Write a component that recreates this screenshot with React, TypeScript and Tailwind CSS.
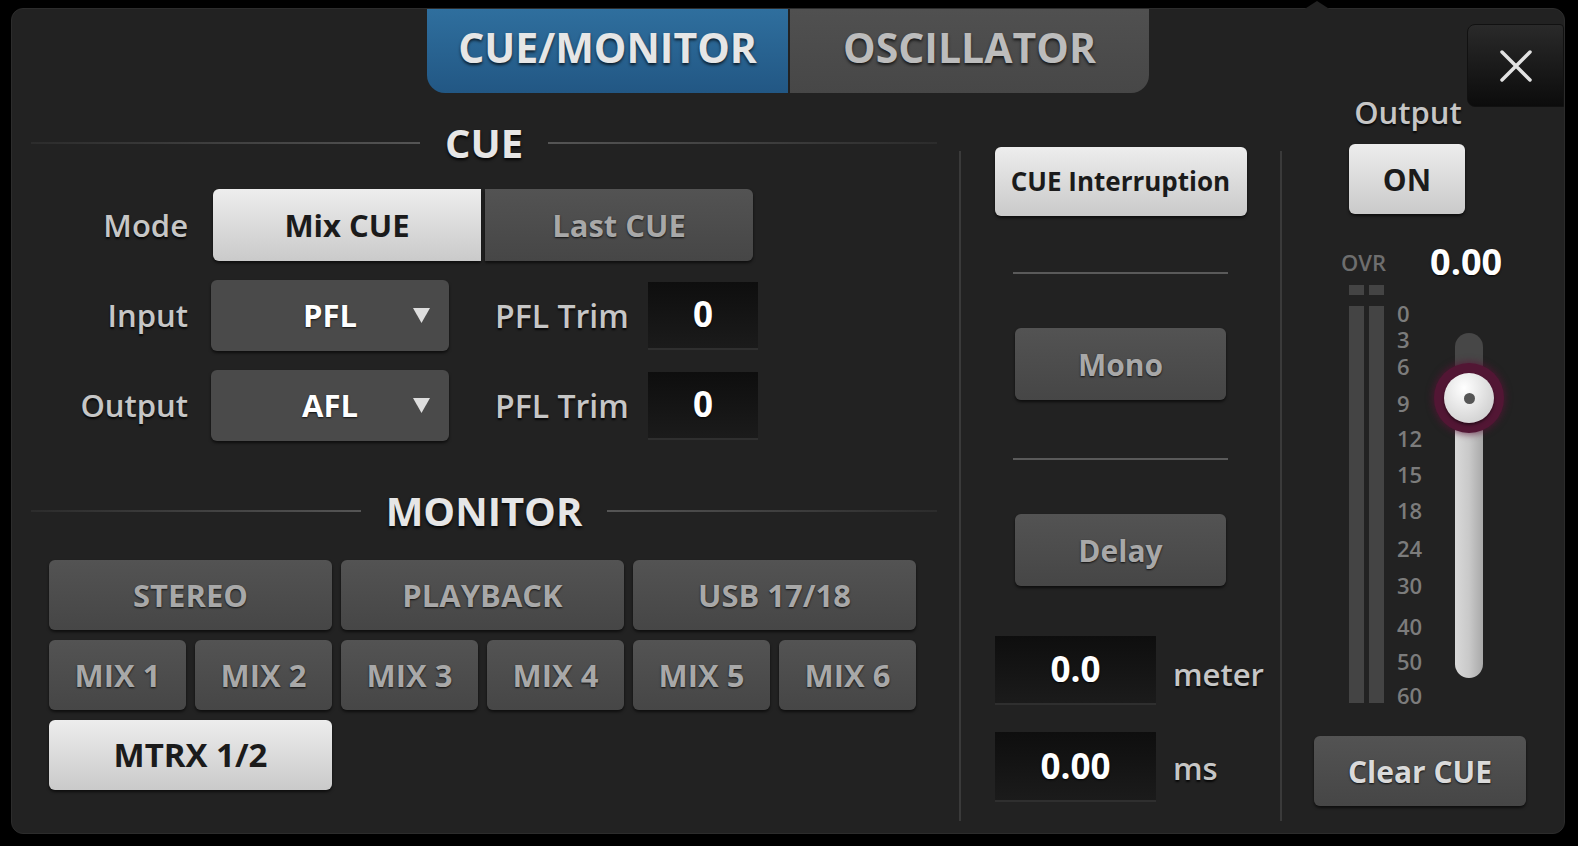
import React from 'react'

const greyBtn =
  'flex items-center justify-center rounded-[6px] bg-linear-to-b from-[#535353] to-[#464646] text-[#a8a8a8] font-bold shadow-[0_2px_3px_rgba(0,0,0,0.6)] [text-shadow:0_1px_2px_rgba(0,0,0,0.8)]'
const lightBtn =
  'flex items-center justify-center rounded-[6px] bg-linear-to-b from-[#ededed] to-[#cacaca] text-[#1b1b1b] font-bold shadow-[0_2px_3px_rgba(0,0,0,0.6)]'
const valueBox =
  'flex items-center justify-center bg-linear-to-b from-[#0e0e0e] to-[#1b1b1b] border-b-2 border-[#2f2f2f] text-white font-bold text-[35px] [text-shadow:0_1px_2px_rgba(0,0,0,0.9)]'
const label = 'text-[#c6c6c6] font-semibold text-[31px] [text-shadow:0_2px_2px_rgba(0,0,0,0.8)]'

function Heading({ title }: { title: string }) {
  return (
    <div className="flex items-center h-[48px] gap-[25px]">
      <div className="flex-1 h-[2px] bg-linear-to-r from-[#2c2c2c] to-[#555]" />
      <span className="text-[40px] leading-none font-bold text-[#e6e6e6] [text-shadow:0_2px_3px_rgba(0,0,0,0.9)]">
        {title}
      </span>
      <div className="flex-1 h-[2px] bg-linear-to-r from-[#555] to-[#2c2c2c]" />
    </div>
  )
}

function Dropdown({ value }: { value: string }) {
  return (
    <div className="relative w-[238px] h-[71px] rounded-[6px] bg-[#4a4a4a] shadow-[0_2px_3px_rgba(0,0,0,0.6)] flex items-center justify-center">
      <span className="text-white font-bold text-[31px] [text-shadow:0_1px_2px_rgba(0,0,0,0.8)]">{value}</span>
      <svg className="absolute right-[19px] top-[28px]" width="17" height="15" viewBox="0 0 17 15">
        <path d="M0 0 H17 L8.5 15 Z" fill="#dedede" />
      </svg>
    </div>
  )
}

const scale: [string, number][] = [
  ['0', 28],
  ['3', 54],
  ['6', 81],
  ['9', 118],
  ['12', 153],
  ['15', 189],
  ['18', 225],
  ['24', 263],
  ['30', 300],
  ['40', 341],
  ['50', 376],
  ['60', 410],
]

function Meter() {
  return (
    <div className="relative h-[431px] mt-[8px]">
      {/* meter caps + bars */}
      <div className="absolute left-[67px] top-0 w-[15px] h-[10px] bg-[#444]" />
      <div className="absolute left-[87px] top-0 w-[15px] h-[10px] bg-[#444]" />
      <div className="absolute left-[67px] top-[21px] w-[15px] h-[397px] bg-[#444]" />
      <div className="absolute left-[87px] top-[21px] w-[15px] h-[397px] bg-[#444]" />
      {scale.map(([n, y]) => (
        <div
          key={n}
          className="absolute left-[115px] text-[22px] leading-[18px] font-semibold text-[#7c7c7c]"
          style={{ top: y - 9 }}
        >
          {n}
        </div>
      ))}
      {/* fader */}
      <div className="absolute left-[173px] top-[48px] w-[28px] h-[345px] rounded-full overflow-hidden flex flex-col">
        <div className="h-[65px] bg-[#474747]" />
        <div className="flex-1 bg-linear-to-r from-[#d9d9d9] via-[#c9c9c9] to-[#a9a9a9]" />
      </div>
      <div className="absolute left-[152px] top-[78px] w-[70px] h-[70px] rounded-full bg-[#521634] shadow-[0_0_6px_2px_rgba(90,20,55,0.6)]" />
      <div className="absolute left-[162px] top-[88px] w-[50px] h-[50px] rounded-full bg-radial-[at_40%_30%] from-[#ffffff] to-[#c4c4c4] shadow-[0_2px_3px_rgba(0,0,0,0.5)] flex items-center justify-center">
        <div className="w-[11px] h-[11px] rounded-full bg-[#555]" />
      </div>
    </div>
  )
}

export default function App() {
  return (
    <div className="w-[1578px] h-[846px] bg-black pt-[8px] pl-[11px] font-['Open_Sans',sans-serif] overflow-hidden">
      <div className="relative w-[1554px] h-[826px] rounded-[12px] bg-[#222222] border border-[#2c2c2c] flex flex-col">
        {/* popover notch */}
        <svg className="absolute left-[1291px] -top-[8px]" width="28" height="9" viewBox="0 0 28 9">
          <path d="M0 9 L14 0 L28 9 Z" fill="#222" />
        </svg>

        {/* close */}
        <div className="absolute right-0 top-[15px] w-[97px] h-[83px] rounded-l-[8px] rounded-tr-[4px] bg-linear-to-b from-[#2a2a2a] to-[#0c0c0c] border border-[#111] flex items-center justify-center">
          <svg width="34" height="34" viewBox="0 0 34 34">
            <path d="M3 3 L31 31 M31 3 L3 31" stroke="#e2e2e2" strokeWidth="3.5" strokeLinecap="round" />
          </svg>
        </div>

        {/* tabs */}
        <div className="flex justify-center h-[84px]">
          <div className="w-[361px] pb-[6px] rounded-bl-[18px] bg-linear-to-b from-[#2f6f9e] to-[#225784] flex items-center justify-center">
            <span className="text-[41px] font-bold text-[#e6e6e6] [text-shadow:0_2px_3px_rgba(0,0,0,0.7)]">CUE/MONITOR</span>
          </div>
          <div className="w-[2px] bg-[#222]" />
          <div className="w-[359px] pb-[6px] rounded-br-[18px] bg-linear-to-b from-[#505050] to-[#474747] flex items-center justify-center">
            <span className="text-[41px] font-bold text-[#bcbcbc] [text-shadow:0_2px_3px_rgba(0,0,0,0.7)]">OSCILLATOR</span>
          </div>
        </div>

        {/* body */}
        <div className="flex flex-1">
          {/* left: CUE + MONITOR */}
          <div className="w-[947px] pl-[19px] pr-[22px] pt-[26px] flex flex-col">
            <Heading title="CUE" />
            <div className="flex flex-col gap-[19px] mt-[22px]">
              <div className="flex items-center h-[72px]">
                <div className={`w-[157px] text-right ${label}`}>Mode</div>
                <div className="flex gap-[4px] ml-[25px]">
                  <div className={`${lightBtn} w-[268px] h-[72px] text-[31px] rounded-r-none`}>Mix CUE</div>
                  <div className={`${greyBtn} w-[268px] h-[72px] text-[31px] rounded-l-none`}>Last CUE</div>
                </div>
              </div>
              <div className="flex items-center h-[71px]">
                <div className={`w-[157px] text-right ${label}`}>Input</div>
                <div className="ml-[23px]">
                  <Dropdown value="PFL" />
                </div>
                <div className={`ml-[46px] w-[137px] ${label} text-[32px]`}>PFL Trim</div>
                <div className={`${valueBox} ml-[16px] w-[110px] h-[68px]`}>0</div>
              </div>
              <div className="flex items-center h-[71px]">
                <div className={`w-[157px] text-right ${label}`}>Output</div>
                <div className="ml-[23px]">
                  <Dropdown value="AFL" />
                </div>
                <div className={`ml-[46px] w-[137px] ${label} text-[32px]`}>PFL Trim</div>
                <div className={`${valueBox} ml-[16px] w-[110px] h-[68px]`}>0</div>
              </div>
            </div>

            <div className="mt-[46px]">
              <Heading title="MONITOR" />
            </div>

            <div className="grid grid-cols-6 gap-x-[9px] gap-y-[10px] mt-[25px] ml-[18px] w-[867px]">
              <div className={`${greyBtn} col-span-2 h-[70px] text-[31px]`}>STEREO</div>
              <div className={`${greyBtn} col-span-2 h-[70px] text-[31px]`}>PLAYBACK</div>
              <div className={`${greyBtn} col-span-2 h-[70px] text-[31px]`}>USB 17/18</div>
              {['MIX 1', 'MIX 2', 'MIX 3', 'MIX 4', 'MIX 5', 'MIX 6'].map((m) => (
                <div key={m} className={`${greyBtn} h-[70px] text-[31px]`}>
                  {m}
                </div>
              ))}
              <div className={`${lightBtn} col-span-2 h-[70px] text-[33px]`}>MTRX 1/2</div>
            </div>
          </div>

          {/* divider */}
          <div className="w-[2px] mt-[58px] mb-[12px] bg-[#3a3a3a]" />

          {/* middle */}
          <div className="w-[319px] flex flex-col items-center pt-[54px]">
            <div className={`${lightBtn} w-[252px] h-[69px] text-[26px]`}>CUE Interruption</div>
            <div className="w-[215px] h-[2px] bg-[#5a5a5a] mt-[56px]" />
            <div className={`${greyBtn} w-[211px] h-[72px] text-[30px] mt-[54px]`}>Mono</div>
            <div className="w-[215px] h-[2px] bg-[#5a5a5a] mt-[58px]" />
            <div className={`${greyBtn} w-[211px] h-[72px] text-[30px] mt-[54px]`}>Delay</div>
            <div className="self-start ml-[34px] mt-[50px] flex items-center">
              <div className={`${valueBox} w-[161px] h-[69px]`}>0.0</div>
              <span className={`ml-[17px] mt-[8px] ${label} text-[29px]`}>meter</span>
            </div>
            <div className="self-start ml-[34px] mt-[27px] flex items-center">
              <div className={`${valueBox} w-[161px] h-[70px]`}>0.00</div>
              <span className={`ml-[17px] mt-[2px] ${label} text-[29px]`}>ms</span>
            </div>
          </div>

          {/* divider */}
          <div className="w-[2px] mt-[58px] mb-[12px] bg-[#3a3a3a]" />

          {/* right: output */}
          <div className="flex-1 flex flex-col">
            <div className={`ml-[50px] w-[152px] text-center leading-[38px] ${label}`}>Output</div>
            <div className={`${lightBtn} ml-[67px] mt-[13px] w-[116px] h-[70px] text-[30px]`}>ON</div>
            <div className="flex items-center h-[30px] mt-[33px]">
              <span className="ml-[59px] text-[22px] text-[#6e6e6e] font-semibold">OVR</span>
              <span className="ml-[44px] text-[36px] font-bold text-white [text-shadow:0_1px_2px_rgba(0,0,0,0.9)]">0.00</span>
            </div>
            <Meter />
            <div className={`${greyBtn} ml-[32px] mt-[20px] w-[212px] h-[70px] text-[30px] text-[#dadada]`}>Clear CUE</div>
          </div>
        </div>
      </div>
    </div>
  )
}
